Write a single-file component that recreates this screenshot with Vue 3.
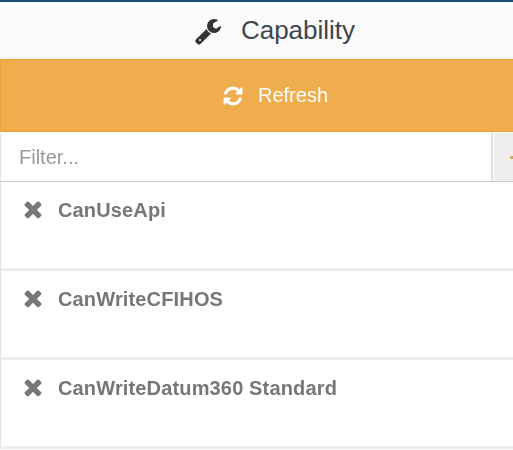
<script setup>
const capabilities = ["CanUseApi", "CanWriteCFIHOS", "CanWriteDatum360 Standard"];
</script>

<template>
  <div class="viewport">
    <div class="panel">
      <header class="title">
        <svg class="icon-wrench" viewBox="0 0 1664 1792">
          <path d="M384 1472q0-26-19-45t-45-19-45 19-19 45 19 45 45 19 45-19 19-45zm644-420l-682 682q-37 37-90 37-52 0-91-37l-106-108q-38-36-38-90 0-53 38-91l681-681q39 98 114.5 173.5t173.5 114.5zm634-435q0 39-23 106-47 134-164.5 217.5t-258.5 83.5q-185 0-316.5-131.5t-131.5-316.5 131.5-316.5 316.5-131.5q58 0 121.5 16.5t107.5 46.5q16 11 16 28t-16 28l-293 169v224l193 107q5-3 79-48.5t135.5-81 70.5-35.5q15 0 23.5 10t8.5 25z" />
        </svg>
        <span>Capability</span>
      </header>

      <button class="refresh">
        <svg class="icon-refresh" viewBox="0 0 1792 1792">
          <path d="M1639 1056q0 5-1 7-64 268-268 434.5t-478 166.5q-146 0-282.5-55t-243.5-157l-129 129q-19 19-45 19t-45-19-19-45v-448q0-26 19-45t45-19h448q26 0 45 19t19 45-19 45l-137 137q71 66 161 102t187 36q134 0 250-65t186-179q11-17 53-117 8-23 30-23h192q13 0 22.5 9.5t9.5 22.5zm25-800v448q0 26-19 45t-45 19h-448q-26 0-45-19t-19-45 19-45l138-138q-148-137-349-137-134 0-250 65t-186 179q-11 17-53 117-8 23-30 23h-199q-13 0-22.5-9.5t-9.5-22.5v-7q65-268 270-434.5t480-166.5q146 0 284 55.5t245 156.5l130-129q19-19 45-19t45 19 19 45z" />
        </svg>
        <span>Refresh</span>
      </button>

      <div class="filter">
        <input class="filter-input" type="text" placeholder="Filter..." />
        <div class="filter-addon"><span class="addon-icon"></span></div>
      </div>

      <ul class="list">
        <li v-for="item in capabilities" :key="item" class="list-item">
          <svg class="icon-times" viewBox="0 0 1408 1792">
            <path d="M1298 1322q0 40-28 68l-136 136q-28 28-68 28t-68-28l-294-294-294 294q-28 28-68 28t-68-28l-136-136q-28-28-28-68t28-68l294-294-294-294q-28-28-28-68t28-68l136-136q28-28 68-28t68 28l294 294 294-294q28-28 68-28t68 28l136 136q28 28 28 68t-28 68l-294 294 294 294q28 28 28 68z" />
          </svg>
          <span class="item-name">{{ item }}</span>
        </li>
      </ul>
    </div>
  </div>
</template>

<style scoped>
.viewport {
  width: 513px;
  height: 450px;
  overflow: hidden;
  background: #fff;
}

.panel {
  width: 550px;
  border-top: 2px solid #1c4a78;
  font-family: "Liberation Sans", Arial, sans-serif;
  filter: blur(0.4px);
}

.title {
  height: 57px;
  display: flex;
  align-items: center;
  justify-content: center;
  gap: 20px;
  background: #fbfbfb;
  color: #3d4650;
  font-size: 26px;
}

.icon-wrench {
  width: 26px;
  height: 28px;
  fill: #333;
}

.refresh {
  width: 100%;
  height: 73px;
  display: flex;
  align-items: center;
  justify-content: center;
  gap: 14px;
  padding: 0;
  background: #f0ad4e;
  border: 1px solid #eea236;
  border-radius: 0;
  color: #fff;
  font-family: inherit;
  font-size: 20px;
}

.icon-refresh {
  width: 22px;
  height: 22px;
  fill: #fff;
}

.filter {
  display: flex;
  height: 49px;
  margin-top: 1px;
  border-bottom: 1px solid #ccc;
  box-sizing: border-box;
}

.filter-input {
  width: 493px;
  box-sizing: border-box;
  padding: 0 18px;
  border: 0;
  border-left: 1px solid #e4e4e4;
  border-right: 2px solid #ddd;
  outline: none;
  background: #fff;
  font-family: inherit;
  font-size: 20px;
}

.filter-input::placeholder {
  color: #999;
}

.filter-addon {
  flex: 1;
  margin-left: 1px;
  display: flex;
  align-items: center;
  padding-left: 16px;
  background: #eee;
}

.addon-icon {
  width: 6px;
  height: 3px;
  background: #d9a765;
}

.list {
  list-style: none;
  margin: 0;
  padding: 0;
}

.list-item {
  height: 86px;
  display: flex;
  align-items: flex-start;
  gap: 15px;
  padding: 14px 0 0 22px;
  box-sizing: border-box;
  background: #fff;
  border-left: 1px solid #e4e4e4;
  border-bottom: 3px solid #eee;
  height: 89px;
}

.icon-times {
  width: 20px;
  height: 26px;
  fill: #777;
}

.item-name {
  margin-top: 3px;
  color: #777;
  font-size: 20px;
  font-weight: 700;
  letter-spacing: 0.15px;
}
</style>

<style>
html,
body {
  overflow: hidden;
}
</style>
